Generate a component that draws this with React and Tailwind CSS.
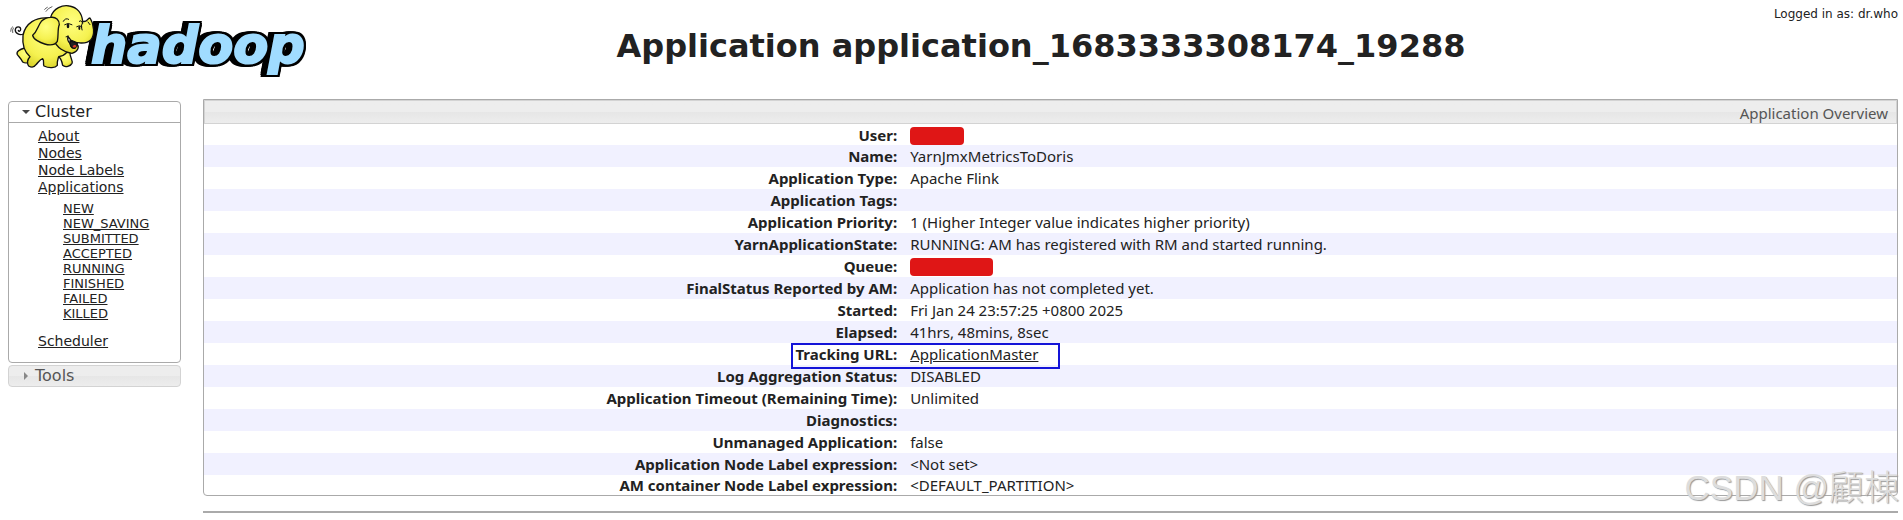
const statusLinks = ['NEW', 'NEW_SAVING', 'SUBMITTED', 'ACCEPTED', 'RUNNING', 'FINISHED', 'FAILED', 'KILLED'];

const rows = [
  { label: 'User:', masked: 'w-[54px]' },
  { label: 'Name:', value: 'YarnJmxMetricsToDoris' },
  { label: 'Application Type:', value: 'Apache Flink' },
  { label: 'Application Tags:', value: '' },
  { label: 'Application Priority:', value: '1 (Higher Integer value indicates higher priority)' },
  { label: 'YarnApplicationState:', value: 'RUNNING: AM has registered with RM and started running.' },
  { label: 'Queue:', masked: 'w-[83px]' },
  { label: 'FinalStatus Reported by AM:', value: 'Application has not completed yet.' },
  { label: 'Started:', value: 'Fri Jan 24 23:57:25 +0800 2025' },
  { label: 'Elapsed:', value: '41hrs, 48mins, 8sec' },
  { label: 'Tracking URL:', value: 'ApplicationMaster', link: true },
  { label: 'Log Aggregation Status:', value: 'DISABLED' },
  { label: 'Application Timeout (Remaining Time):', value: 'Unlimited' },
  { label: 'Diagnostics:', value: '' },
  { label: 'Unmanaged Application:', value: 'false' },
  { label: 'Application Node Label expression:', value: '<Not set>' },
  { label: 'AM container Node Label expression:', value: '<DEFAULT_PARTITION>' },
];

function Logo() {
  return (
    <svg width="320" height="84" viewBox="0 0 320 84" role="img" aria-label="hadoop">
      <defs>
        <radialGradient id="skin" cx="0.5" cy="0.35" r="0.75">
          <stop offset="0" stopColor="#ffff80" />
          <stop offset="0.6" stopColor="#f5f150" />
          <stop offset="1" stopColor="#d2cb20" />
        </radialGradient>
      </defs>
      <text
        x="91"
        y="63"
        fill="#a0dcff"
        stroke="#a0dcff"
        strokeWidth="2"
        className="font-['DejaVu_Sans'] text-[51px] font-bold italic [filter:drop-shadow(2px_0_0_#000)_drop-shadow(-2px_0_0_#000)_drop-shadow(0_2px_0_#000)_drop-shadow(0_-2px_0_#000)_drop-shadow(-4px_0_0_#000)]"
      >
        hadoop
      </text>
      {/* elephant */}
      <g transform="translate(8 2) scale(0.3333)" fill="url(#skin)" stroke="#111" strokeWidth="4" strokeLinejoin="round" strokeLinecap="round">
        <path d="M46 96C34 102 20 92 22 82C24 72 38 72 38 82C38 88 32 90 31 85" fill="none" />
        <path d="M50 138C34 142 24 150 28 158C34 166 40 170 44 180C54 186 66 182 74 170Z" />
        <path d="M148 160C160 168 162 178 164 190C172 198 188 192 192 184C196 174 184 168 186 146Z" />
        <path d="M122 48C84 44 52 64 45 100C42 130 50 150 66 164C58 172 56 184 62 192C72 198 80 194 84 188C92 180 96 172 104 170C110 176 104 184 108 192C124 200 142 198 148 190C146 180 150 172 152 164C172 162 184 146 186 128Z" />
        <path d="M128 46C136 18 164 8 184 12C208 16 222 34 224 58C238 62 238 48 246 48C258 66 262 100 248 114C232 128 206 124 188 114C184 108 180 106 180 102C178 112 182 122 188 126C188 140 202 140 208 128C214 134 210 150 192 154C170 152 146 138 136 112Z" />
        <path d="M186 116C184 128 190 142 202 138C208 134 208 128 208 124Z" fill="#222" />
        <path d="M194 134C196 128 202 128 206 132C202 138 198 138 194 134Z" fill="#e23b2e" stroke="none" />
        <path d="M128 46C144 44 154 54 154 68C148 80 152 104 148 118C140 130 124 130 110 126C96 122 76 112 74 100C88 88 90 70 100 58C108 50 118 46 128 46Z" />
        <path d="M174 104Q180 100 184 108M166 58Q172 46 182 52M214 58Q220 52 224 64M170 68Q180 60 192 68M206 74Q214 68 222 74M224 60Q216 74 222 84M240 60L246 68" fill="none" strokeWidth="3" />
        <path d="M114 28Q120 18 132 14M110 22Q114 18 118 16M8 88Q8 76 14 74M14 92Q12 84 16 78" fill="none" strokeWidth="2" />
        <ellipse cx="180" cy="72" rx="4" ry="7" fill="#111" stroke="none" />
        <ellipse cx="214" cy="78" rx="3" ry="6" fill="#111" stroke="none" />
      </g>
    </svg>
  );
}

function Sidebar() {
  return (
    <nav className="w-[173px] shrink-0 pt-[2px] text-[#222222]">
      <div className="rounded border border-[#aaaaaa]">
        <button type="button" className="flex h-[21px] w-full items-center border-b border-[#aaaaaa] pl-[13px] text-base leading-5">
          <svg width="8" height="4" viewBox="0 0 8 4" className="mr-[5px]">
            <path d="M0 0h8L4 4z" fill="#454545" />
          </svg>
          Cluster
        </button>
        <ul className="pt-[5px] pb-3 pl-[29px] text-sm leading-[17px] underline">
          <li><a href="#about">About</a></li>
          <li><a href="#nodes">Nodes</a></li>
          <li><a href="#labels">Node Labels</a></li>
          <li>
            <a href="#apps">Applications</a>
            <ul className="pt-[5px] pb-3 pl-[25px] text-[13px] leading-[15px]">
              {statusLinks.map((name) => (
                <li key={name}><a href={`#${name}`}>{name}</a></li>
              ))}
            </ul>
          </li>
          <li><a href="#scheduler">Scheduler</a></li>
        </ul>
      </div>
      <button type="button" className="mt-[2px] flex h-[22px] w-full items-center rounded border border-[#d3d3d3] bg-linear-to-b from-[#ededed] from-50% via-[#e6e6e6] via-50% to-[#ededed] pl-[15px] text-base leading-5 text-[#555555]">
        <svg width="4" height="8" viewBox="0 0 4 8" className="mr-[7px]">
          <path d="M0 0v8l4-4z" fill="#888888" />
        </svg>
        Tools
      </button>
    </nav>
  );
}

function Value({ row }) {
  if (row.masked) return <span className={`mt-[2px] block h-[18px] rounded bg-[#df1616] ${row.masked}`} />;
  if (row.link) return <a href="#master" className="underline">{row.value}</a>;
  return row.value;
}

function Overview() {
  return (
    <main className="min-w-0 flex-1">
      <div className="rounded-b border border-[#aaaaaa]">
        <h2 className="h-6 border border-[#d3d3d3] bg-linear-to-b from-[#ededed] from-50% via-[#e6e6e6] via-50% to-[#ededed] pr-2 text-right font-['Noto_Sans'] text-[15px] leading-6 text-[#555555]">
          Application Overview
        </h2>
        <table className="w-full table-fixed border-collapse font-['Noto_Sans'] text-[15px] leading-5">
          <tbody>
            {rows.map((row) => (
              <tr key={row.label} className="h-[22px] first:h-[21px] last:h-5 even:bg-[#f1f1ff]">
                <th className="w-[41%] p-0 pr-px text-right font-bold">
                  <span className="relative">
                    {row.link && <span className="pointer-events-none absolute -top-[1px] -right-[163px] h-[26px] w-[269px] border-2 border-[#1414d8]" />}
                    {row.label}
                  </span>
                </th>
                <td className="p-0 pl-3"><Value row={row} /></td>
              </tr>
            ))}
          </tbody>
        </table>
      </div>
      <hr className="mt-[15px] border-t-2 border-[#aaaaaa]" />
    </main>
  );
}

export default function App() {
  return (
    <div className="relative min-h-screen bg-white pr-[5px] pl-2 font-['DejaVu_Sans',sans-serif] text-[#222222]">
      <header className="flex h-[99px] items-start">
        <div className="-ml-2 shrink-0"><Logo /></div>
        <h1 className="flex-1 pt-6 pr-3 text-center text-[32px] leading-[44px] font-bold">
          Application application_1683333308174_19288
        </h1>
        <p className="pt-[6px] text-xs leading-4">Logged in as: dr.who</p>
      </header>
      <div className="flex gap-[22px]">
        <Sidebar />
        <Overview />
      </div>
      <div className="pointer-events-none absolute right-1 bottom-2 font-['Liberation_Sans','Noto_Sans_CJK_TC',sans-serif] text-[35px] leading-[48px] font-light text-[#dddddd] [text-shadow:1px_1px_1px_#999999]">
        CSDN @顧棟
      </div>
    </div>
  );
}
